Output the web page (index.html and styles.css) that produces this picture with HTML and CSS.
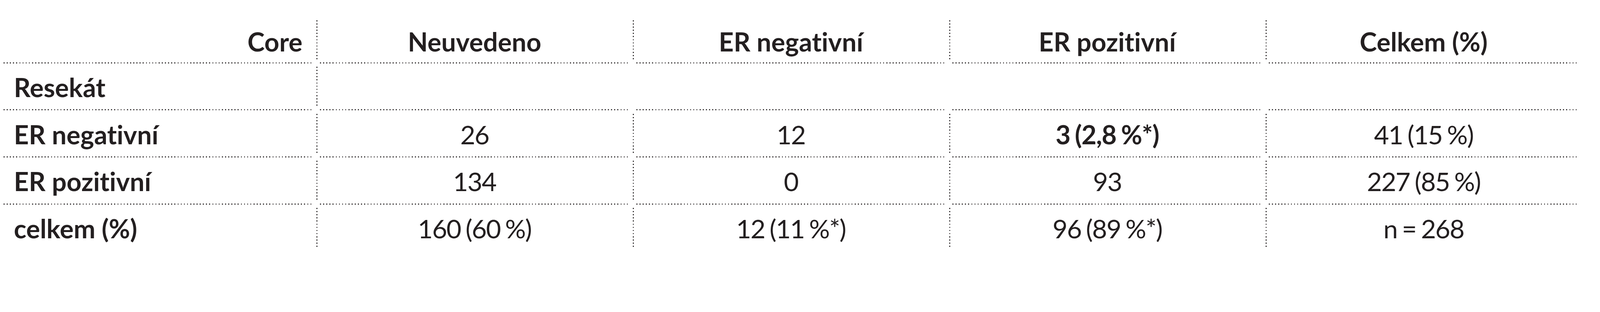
FILE: index.html
```html
<!DOCTYPE html>
<html lang="cs">
<head>
<meta charset="utf-8">
<title>Core / Resekát</title>
<link rel="stylesheet" href="styles.css">
</head>
<body>
<table class="grid">
  <colgroup>
    <col class="col"><col class="col"><col class="col"><col class="col"><col class="col">
  </colgroup>
  <thead>
    <tr class="head">
      <th class="core">Core</th>
      <th class="v">Neuvedeno</th>
      <th class="v">ER negativní</th>
      <th class="v">ER pozitivní</th>
      <th class="v">Celkem (%)</th>
    </tr>
  </thead>
  <tbody>
    <tr class="row">
      <td class="lbl">Resekát</td>
      <td class="v"></td>
      <td class="blank"></td>
      <td class="blank"></td>
      <td class="blank"></td>
    </tr>
    <tr class="row">
      <td class="lbl">ER negativní</td>
      <td class="v num">26</td>
      <td class="v num">12</td>
      <td class="v strong">3 (2,8 %*)</td>
      <td class="v num">41 (15 %)</td>
    </tr>
    <tr class="row">
      <td class="lbl">ER pozitivní</td>
      <td class="v num">134</td>
      <td class="v num">0</td>
      <td class="v num">93</td>
      <td class="v num">227 (85 %)</td>
    </tr>
    <tr class="row">
      <td class="lbl">celkem (%)</td>
      <td class="v num">160 (60 %)</td>
      <td class="v num">12 (11 %*)</td>
      <td class="v num">96 (89 %*)</td>
      <td class="v num">n = 268</td>
    </tr>
  </tbody>
</table>
</body>
</html>
```
FILE: styles.css
```css
html, body {
  margin: 0;
  padding: 0;
  background: #ffffff;
}

body {
  font-family: Lato, "Open Sans", "Liberation Sans", sans-serif;
  color: #231f20;
  font-variant-ligatures: none;
}

.grid {
  margin-top: 43.4px;
  width: 4049.6px;
  table-layout: fixed;
  border-collapse: separate;
  border-spacing: 0;
  font-size: 66.5px;
  line-height: 1;
}

.col {
  width: 809.9px;
}

.grid th,
.grid td {
  padding: 0;
  vertical-align: top;
  text-align: center;
  white-space: nowrap;
  font-weight: 400;
  background-repeat: no-repeat;
}

/* header row */
.head th {
  height: 86.8px;
  padding-top: 29.5px;
  font-weight: 700;
}

.head th.v {
  background-image: repeating-linear-gradient(to bottom, #231f20 0 2.6px, transparent 2.6px 8.1px);
  background-position: 0 8.7px;
  background-size: 2.6px 103.3px;
}

.head th.core {
  text-align: right;
  padding-right: 35.6px;
}

/* body rows */
.row td {
  height: 90.3px;
  padding-top: 30.4px;
  background-image: repeating-linear-gradient(to right, #231f20 0 2.6px, transparent 2.6px 8.1px);
  background-position: 8.7px 0;
  background-size: calc(100% - 15.6px) 2.6px;
}

.row td.v {
  background-image:
    repeating-linear-gradient(to right, #231f20 0 2.6px, transparent 2.6px 8.1px),
    repeating-linear-gradient(to bottom, #231f20 0 2.6px, transparent 2.6px 8.1px);
  background-position: 8.7px 0, 0 11.3px;
  background-size: calc(100% - 15.6px) 2.6px, 2.6px 104.2px;
}

.row td.lbl {
  text-align: left;
  padding-left: 35.6px;
  font-weight: 700;
}

.row td.num {
  letter-spacing: -1.9px;
  word-spacing: -3px;
}

.row td.strong {
  font-weight: 700;
  letter-spacing: -1.2px;
  word-spacing: -3px;
}
```
